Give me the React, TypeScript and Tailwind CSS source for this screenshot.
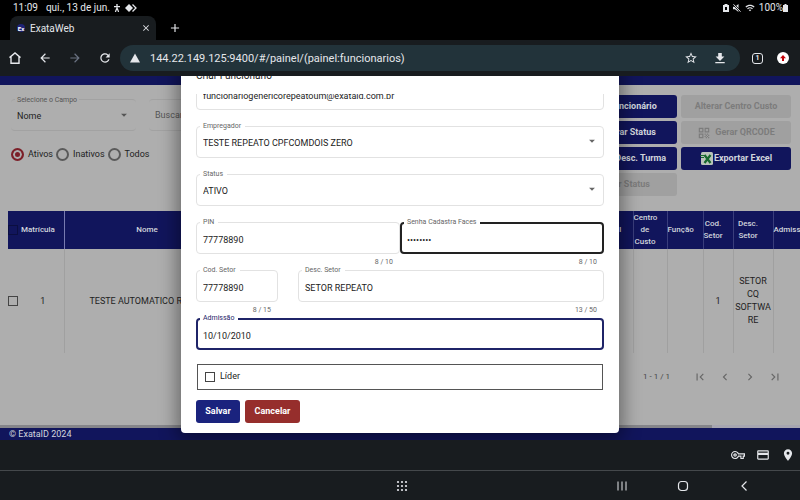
import type { ReactNode } from "react";
import {
  MdAdd,
  MdArrowBack,
  MdArrowDropDown,
  MdArrowForward,
  MdChevronLeft,
  MdChevronRight,
  MdClose,
  MdFirstPage,
  MdLastPage,
  MdLocationOn,
  MdOutlineCreditCard,
  MdOutlineVpnKey,
  MdQrCode,
  MdRefresh,
  MdStarBorder,
  MdWifi,
} from "react-icons/md";

function StatusBar() {
  return (
    <div className="flex h-4 shrink-0 items-center justify-between pr-3 pl-[13px] text-[10px] leading-4 text-gray-200">
      <div className="flex items-center">
        <span>11:09</span>
        <span className="ml-2">qui., 13 de jun.</span>
        <svg viewBox="0 0 8 8" className="ml-[3px] size-2" fill="none" stroke="currentColor" strokeWidth="1.200">
          <circle cx="4" cy="1" r=".9" fill="currentColor" stroke="none" />
          <path d="M1 2.600h6M4 2.600v2.200M3.700 4.500L2.400 8M4.300 4.500L5.600 8" />
        </svg>
        <svg viewBox="0 0 12 8" className="ml-1 h-2 w-3" fill="currentColor">
          <path d="M4 0l4 4-4 4-4-4z" />
          <path d="M7.500.5L11 4 7.500 7.500" fill="none" stroke="currentColor" strokeWidth="1.300" />
        </svg>
      </div>
      <div className="flex items-center gap-1">
        <svg viewBox="0 0 6 8" className="h-2 w-[6px]">
          <path d="M1.500 0h3v1H6v7H0V1h1.500z" fill="currentColor" />
          <path d="M2 3h2v3H2z" fill="#000" />
        </svg>
        <svg viewBox="0 0 8 8" className="size-2" fill="currentColor">
          <path d="M0 2.800h2L5.500 0v8L2 5.200H0z" />
          <path d="M.5.300l7 7.400" stroke="#000" strokeWidth="2" />
          <path d="M.5.300l7 7.400" stroke="currentColor" strokeWidth="1" />
        </svg>
        <MdWifi className="size-2.5" />
        <div className="flex items-center">
          <span>100%</span>
          <svg viewBox="0 0 5 8" className="h-2 w-[5px]" fill="currentColor">
            <path d="M1.500 0h2v1H5v7H0V1h1.500z" />
          </svg>
        </div>
      </div>
    </div>
  );
}

function TabStrip() {
  return (
    <div className="flex h-6 shrink-0 items-center pl-[10px]">
      <div className="flex h-full w-[146px] items-center rounded-t-lg bg-[#181c1f] pr-[5px] pl-[7px] text-[10px] text-gray-200">
        <span className="flex size-2 items-center justify-center rounded-full bg-[#1e2377] text-[6px] font-bold text-white">
          Ex
        </span>
        <span className="ml-[5px] flex-1">ExataWeb</span>
        <button type="button" aria-label="Fechar guia">
          <MdClose className="size-2.5" />
        </button>
      </div>
      <button type="button" aria-label="Nova guia" className="ml-3 text-gray-200">
        <MdAdd className="size-3.5" />
      </button>
    </div>
  );
}

function Toolbar() {
  return (
    <div className="flex h-9 shrink-0 items-center bg-[#181c1f] pr-[11px] pl-2 text-gray-200">
      <div className="flex items-center gap-4">
        <button type="button" aria-label="Página inicial">
          <svg viewBox="0 0 14 14" className="size-3.5" fill="none" stroke="currentColor" strokeWidth="1.400">
            <path d="M1.500 6.600L7 2l5.500 4.600M3 5.500v6.800h8V5.500" />
          </svg>
        </button>
        <button type="button" aria-label="Voltar">
          <MdArrowBack className="size-3.5" />
        </button>
        <button type="button" aria-label="Avançar" className="text-gray-500">
          <MdArrowForward className="size-3.5" />
        </button>
        <button type="button" aria-label="Recarregar">
          <MdRefresh className="size-3.5" />
        </button>
      </div>
      <div className="ml-2 flex h-[26px] flex-1 items-center gap-2 rounded-full bg-[#22333a] pr-3.5 pl-[9px]">
        <svg viewBox="0 0 12 12" className="size-3" fill="currentColor">
          <path d="M6 1.500l5 9H1z" />
        </svg>
        <input
          aria-label="Endereço"
          className="h-5 flex-1 bg-transparent pl-px text-[11px] text-gray-200 outline-none"
          defaultValue="144.22.149.125:9400/#/painel/(painel:funcionarios)"
        />
        <button type="button" aria-label="Favoritar">
          <MdStarBorder className="size-3.5" />
        </button>
        <button type="button" aria-label="Downloads" className="ml-2">
          <svg viewBox="0 0 12 12" className="size-3" fill="currentColor">
            <path d="M4.200 1h3.600v3.500h2.600L6 8.900 1.600 4.500h2.600zM1.300 9.900h9.400v1.400H1.300z" />
          </svg>
        </button>
      </div>
      <button
        type="button"
        aria-label="Guias abertas"
        className="ml-3 flex size-[11px] items-center justify-center rounded-[3px] border border-gray-200 text-[7px] font-bold"
      >
        1
      </button>
      <button
        type="button"
        aria-label="Atualizar navegador"
        className="ml-3.5 flex size-3 items-center justify-center rounded-full bg-white text-red-700"
      >
        <svg viewBox="0 0 8 8" className="size-2" fill="currentColor">
          <path d="M4 1l3 3.300H5V7H3V4.300H1z" />
        </svg>
      </button>
    </div>
  );
}

function PageButton({ children, disabled }: { children: ReactNode; disabled?: boolean }) {
  return (
    <button
      type="button"
      disabled={disabled}
      className="flex h-[23px] items-center justify-center rounded-[3px] bg-[#11155c] text-[9px] font-bold whitespace-nowrap text-gray-300 disabled:bg-[#a0a0a0] disabled:text-[#7c7c7c]"
    >
      {children}
    </button>
  );
}

function RadioOption({ label, checked }: { label: string; checked?: boolean }) {
  return (
    <label className="flex items-center gap-1">
      <input
        type="radio"
        name="situacao"
        defaultChecked={checked}
        className="size-[13px] appearance-none rounded-full border-2 border-[#5a5a5a] checked:border-[#7c1f28] checked:bg-[#7c1f28] checked:shadow-[inset_0_0_0_2px_#aeaeae]"
      />
      {label}
    </label>
  );
}

function Filters() {
  return (
    <div className="flex justify-between pr-[9px] pl-[11px]">
      <div className="pt-[14px] text-[9px] text-[#222]">
        <div className="flex gap-[13px]">
          <label className="relative block h-8 w-[125px] rounded-sm border-y border-[#a2a2a2]">
            <span className="absolute -top-1.5 left-1 bg-[#aeaeae] px-0.5 text-[7px] leading-3 text-[#555]">
              Selecione o Campo
            </span>
            <select className="h-full w-full appearance-none pt-1 pl-1.5 outline-none">
              <option>Nome</option>
            </select>
            <MdArrowDropDown className="absolute top-2 right-[5px] size-3.5 text-[#555]" />
          </label>
          <input
            aria-label="Buscar"
            placeholder="Buscar"
            className="h-8 w-44 rounded-sm border-y border-[#a2a2a2] pl-1.5 outline-none placeholder:text-[#555]"
          />
        </div>
        <div className="mt-[17px] flex gap-[3px]">
          <RadioOption label="Ativos" checked />
          <RadioOption label="Inativos" />
          <RadioOption label="Todos" />
        </div>
      </div>
      <div className="grid grid-cols-[110px_110px] gap-x-1 gap-y-[3px] pt-[10px]">
        <PageButton>Criar Funcionário</PageButton>
        <PageButton disabled>Alterar Centro Custo</PageButton>
        <PageButton>Restaurar Status</PageButton>
        <PageButton disabled>
          <MdQrCode className="mr-1 size-3.5" />
          Gerar QRCODE
        </PageButton>
        <PageButton>Importar Desc. Turma</PageButton>
        <PageButton>
          <svg viewBox="0 0 13 13" className="mr-px size-[13px]">
            <rect x="1" width="12" height="13" rx="1.500" fill="#b9c4b9" />
            <path d="M4.500 3l6 8M10.500 3l-6 8" stroke="#16692d" strokeWidth="2.200" />
            <path d="M0 3.500h5M1 5.500h3" stroke="#16692d" strokeWidth="1.200" />
          </svg>
          Exportar Excel
        </PageButton>
        <PageButton disabled>Alterar Status</PageButton>
      </div>
    </div>
  );
}

const columns = [
  { title: "Nome", value: "TESTE AUTOMATICO REPEATO", width: "w-44" },
  { title: "CPF", value: "", width: "w-[357px]" },
  { title: "E-mail", value: "", width: "w-9" },
  { title: "Centro de Custo", value: "", width: "w-[34px]" },
  { title: "Função", value: "", width: "w-9" },
  { title: "Cod. Setor", value: "1", width: "w-[30px]" },
  { title: "Desc. Setor", value: "SETOR CQ SOFTWARE", width: "w-10" },
  { title: "Admissão", value: "", width: "w-[46px]" },
];

function EmployeeTable() {
  return (
    <div className="mt-[15px] ml-2 overflow-hidden">
      <table className="w-[811px] table-fixed border-collapse text-center">
        <thead>
          <tr className="h-[38px] bg-[#11155c] text-[8px] leading-3 text-gray-300">
            <th className="w-14 border-r border-[#777ab0] font-medium">
              <div className="flex items-center gap-[3px]">
                <input
                  type="checkbox"
                  aria-label="Selecionar todos"
                  className="size-2.5 appearance-none border border-[#0b0e40]"
                />
                Matrícula
              </div>
            </th>
            {columns.map((c) => (
              <th key={c.title} className={`${c.width} border-r border-[#3a3e7c] pr-2.5 font-medium`}>
                {c.title}
              </th>
            ))}
          </tr>
        </thead>
        <tbody>
          <tr className="h-[104px] text-[9px] leading-[13px] text-[#222]">
            <td className="border-r border-[#a0a0a0]">
              <div className="flex items-center">
                <input
                  type="checkbox"
                  aria-label="Selecionar linha"
                  className="size-2.5 appearance-none border border-[#444]"
                />
                <span className="flex-1 pl-1">1</span>
              </div>
            </td>
            {columns.map((c) => (
              <td key={c.title} className="border-r border-[#a0a0a0] break-words">
                {c.value}
              </td>
            ))}
          </tr>
        </tbody>
      </table>
    </div>
  );
}

function EmployeesPage() {
  return (
    <div className="flex h-full flex-col bg-[#aeaeae]">
      <div className="h-[9px] shrink-0 bg-[#11155c]" />
      <Filters />
      <EmployeeTable />
      <div className="flex h-12 shrink-0 items-center justify-end gap-[11px] pr-[18px] text-[#666]">
        <span className="mr-3 text-[8px] text-[#444]">1 - 1 / 1</span>
        <button type="button" aria-label="Primeira página">
          <MdFirstPage className="size-3.5" />
        </button>
        <button type="button" aria-label="Página anterior">
          <MdChevronLeft className="size-3.5" />
        </button>
        <button type="button" aria-label="Próxima página">
          <MdChevronRight className="size-3.5" />
        </button>
        <button type="button" aria-label="Última página">
          <MdLastPage className="size-3.5" />
        </button>
      </div>
      <div className="mt-auto h-[3px] shrink-0 bg-[#a6a5b0]">
        <div className="h-full w-[89%] bg-[#85858a]" />
      </div>
      <footer className="h-3 shrink-0 bg-[#11155c] pl-[9px] text-[9px] leading-3 text-gray-300">© ExataID 2024</footer>
    </div>
  );
}

type FieldProps = {
  label: string;
  value: string;
  type?: string;
  counter?: string;
  select?: boolean;
  tone?: "plain" | "dark" | "navy";
  className?: string;
};

const tones = {
  plain: "border border-[#e2e2e2]",
  dark: "border-2 border-[#222]",
  navy: "border-2 border-[#1f2468]",
};

function Field({ label, value, type = "text", counter, select, tone = "plain", className = "" }: FieldProps) {
  return (
    <div className={`h-12 shrink-0 ${className}`}>
      <label className="relative block h-8">
        <div className={`absolute inset-0 rounded-sm ${tones[tone]}`} />
        <span
          className={`absolute -top-1.5 left-1 bg-white pr-1 pl-[3px] text-[7px] leading-3 ${tone === "navy" ? "text-[#1f2468]" : "text-[#666]"}`}
        >
          {label}
        </span>
        {select ? (
          <>
            <select className="relative h-full w-full appearance-none pt-1 pl-[7px] outline-none">
              <option>{value}</option>
            </select>
            <MdArrowDropDown className="absolute top-2 right-[5px] size-3.5 text-[#666]" />
          </>
        ) : (
          <input
            type={type}
            defaultValue={value}
            className="relative h-full w-full bg-transparent pt-1 pl-[7px] outline-none"
          />
        )}
      </label>
      {counter && <div className="pr-[7px] text-right text-[7px] leading-4 text-[#666]">{counter}</div>}
    </div>
  );
}

function EmployeeDialog() {
  return (
    <div className="absolute inset-0 flex items-end justify-center overflow-hidden pb-[7px]">
      <div
        role="dialog"
        aria-label="Criar Funcionário"
        className="flex h-[calc(100%+18px)] w-[438px] flex-col rounded-sm bg-white px-[15px] shadow-[0_4px_18px_4px_rgba(0,0,0,0.4)]"
      >
        <h2 className="h-9 shrink-0 text-[10px] leading-9 text-[#222]">Criar Funcionário</h2>
        <form className="flex min-h-0 flex-1 flex-col justify-end overflow-hidden pb-2.5 text-[9px] text-[#222]">
          <Field label="E-mail" value="funcionariogenericorepeatoum@exataid.com.br" />
          <Field label="Empregador" value="TESTE REPEATO CPFCOMDOIS ZERO" select />
          <Field label="Status" value="ATIVO" select />
          <div className="flex">
            <Field label="PIN" value="77778890" counter="8 / 10" className="flex-1" />
            <Field
              label="Senha Cadastra Faces"
              value="12345678"
              type="password"
              counter="8 / 10"
              tone="dark"
              className="flex-1"
            />
          </div>
          <div className="flex gap-5">
            <Field label="Cod. Setor" value="77778890" counter="8 / 15" className="w-[82px]" />
            <Field label="Desc. Setor" value="SETOR REPEATO" counter="13 / 50" className="flex-1" />
          </div>
          <Field label="Admissão" value="10/10/2010" tone="navy" />
          <label className="mx-px -mt-0.5 flex h-[26px] shrink-0 items-center gap-[5px] border border-[#555] px-[7px]">
            <input type="checkbox" className="size-2.5 appearance-none border border-[#444]" />
            Líder
          </label>
          <div className="mt-2.5 flex shrink-0 gap-[5px] font-bold text-white">
            <button type="button" className="h-[23px] w-11 rounded-[3px] bg-[#1a237e]">
              Salvar
            </button>
            <button type="button" className="h-[23px] w-[55px] rounded-[3px] bg-[#962e2c]">
              Cancelar
            </button>
          </div>
        </form>
      </div>
    </div>
  );
}

function AutofillBar() {
  return (
    <div className="flex h-[31px] shrink-0 items-center justify-end gap-[11px] border-b border-[#44484b] bg-[#181c1f] pr-[5px] text-gray-200">
      <button type="button" aria-label="Senhas">
        <MdOutlineVpnKey className="size-3.5" />
      </button>
      <button type="button" aria-label="Cartões">
        <MdOutlineCreditCard className="size-3.5" />
      </button>
      <button type="button" aria-label="Endereços">
        <MdLocationOn className="size-3.5" />
      </button>
    </div>
  );
}

function SystemNav() {
  return (
    <div className="grid h-[29px] shrink-0 grid-cols-[1fr_auto_1fr] items-center bg-[#181c1f] text-gray-200">
      <button type="button" aria-label="Aplicativos" className="col-start-2 ml-1">
        <svg viewBox="0 0 12 12" className="size-3" fill="currentColor">
          {[2, 6, 10].map((y) => [2, 6, 10].map((x) => <circle key={`${x}-${y}`} cx={x} cy={y} r="1.100" />))}
        </svg>
      </button>
      <div className="flex items-center justify-end gap-[49px] pr-[50px]">
        <button type="button" aria-label="Recentes">
          <svg viewBox="0 0 12 12" className="size-3" stroke="currentColor" strokeWidth="1">
            <path d="M2 1.500v9M6 1.500v9M10 1.500v9" />
          </svg>
        </button>
        <button type="button" aria-label="Início">
          <svg viewBox="0 0 12 12" className="size-3" fill="none" stroke="currentColor" strokeWidth="1.200">
            <rect x="1.500" y="1.500" width="9" height="9" rx="3" />
          </svg>
        </button>
        <button type="button" aria-label="Voltar">
          <svg viewBox="0 0 12 12" className="size-3" fill="none" stroke="currentColor" strokeWidth="1.200">
            <path d="M8.500 1.500L4 6l4.500 4.500" />
          </svg>
        </button>
      </div>
    </div>
  );
}

export default function App() {
  return (
    <div className="flex h-screen flex-col overflow-hidden bg-black font-['Roboto',sans-serif]">
      <StatusBar />
      <TabStrip />
      <Toolbar />
      <main className="relative min-h-0 flex-1 overflow-hidden">
        <EmployeesPage />
        <EmployeeDialog />
      </main>
      <AutofillBar />
      <SystemNav />
    </div>
  );
}
